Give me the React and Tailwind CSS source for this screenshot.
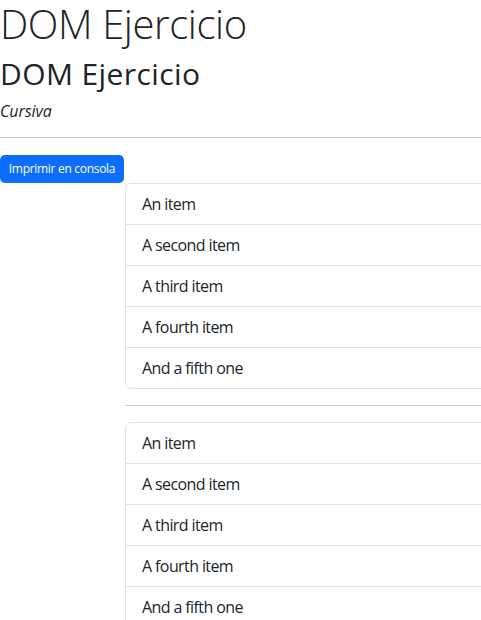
import React from 'react';

const items = ['An item', 'A second item', 'A third item', 'A fourth item', 'And a fifth one'];

function ListGroup() {
  return (
    <ul className="ml-[125px] w-[420px] shrink-0 rounded-md border border-[#dee2e6]">
      {items.map((it, i) => (
        <li
          key={i}
          className={`px-4 leading-10 text-base text-[#212529] tracking-[-0.6px] ${i > 0 ? 'h-[41px] border-t border-[#dee2e6]' : 'h-10'}`}
        >
          {it}
        </li>
      ))}
    </ul>
  );
}

export default function App() {
  return (
    <div className="w-[481px] h-[620px] overflow-hidden bg-white font-['Open_Sans',sans-serif] text-[#212529]">
      <div className="flex flex-col items-start">
        <h1 className="h-12 mb-2 text-[40px] leading-[48px] font-light tracking-[-0.4px]">DOM Ejercicio</h1>
        <h1 className="h-[35px] mb-2 text-[30px] leading-[35px] font-normal tracking-[0.4px]">DOM Ejercicio</h1>
        <p className="h-6 leading-6 italic text-base tracking-[-0.1px]">Cursiva</p>
        <hr className="mt-[14px] mb-[17px] w-full border-0 border-t border-[#c8c9ca]" />
        <button className="h-7 w-[124px] rounded-[5px] bg-[#0d6efd] text-white text-[12px] tracking-[-0.3px] leading-7">
          Imprimir en consola
        </button>
        <ListGroup />
        <hr className="ml-[125px] my-4 w-[420px] border-0 border-t border-[#c8c9ca]" />
        <ListGroup />
      </div>
    </div>
  );
}
